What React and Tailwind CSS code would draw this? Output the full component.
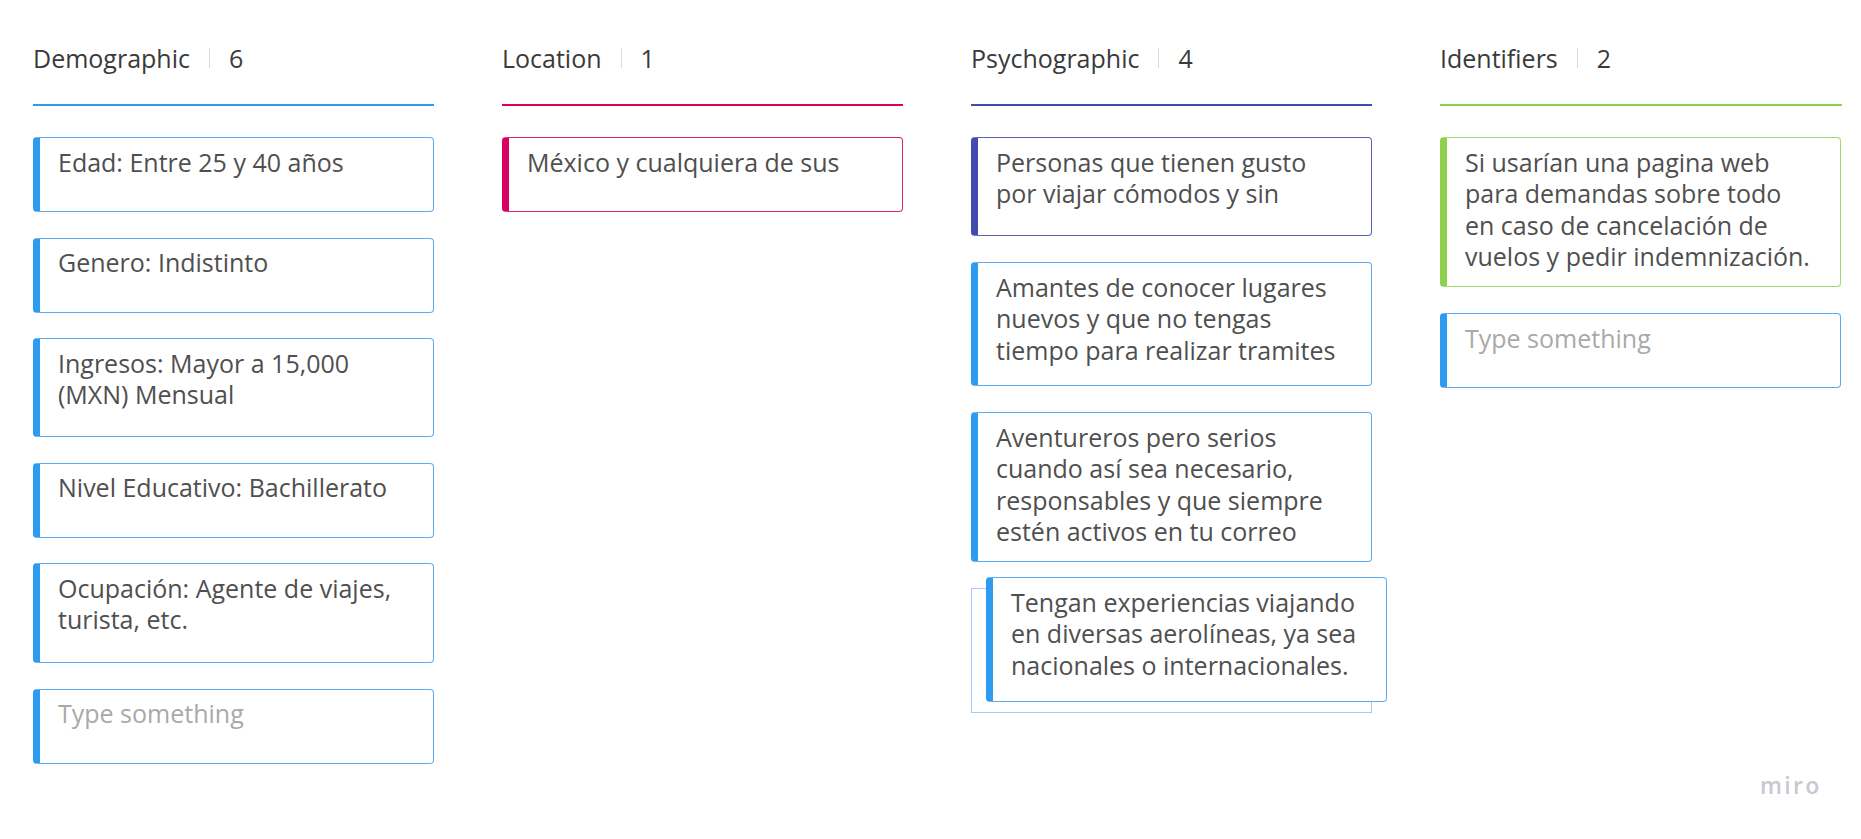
import React from "react";

const FONT = { fontFamily: '"Open Sans", "Noto Sans", sans-serif' };

function Header({ title, count, lineClass }) {
  return (
    <div>
      <div className="flex items-center h-[31.5px] text-[25px] leading-[31.5px] text-[#3a3a3a]">
        <span>{title}</span>
        <span className="mx-[19px] w-px h-[20px] bg-[#dcdcdc]" />
        <span>{count}</span>
      </div>
      <div className={"mt-[30px] h-[2px] " + lineClass} />
    </div>
  );
}

function Card({ lines, h, color = "blue", placeholder = false }) {
  const colors = {
    blue: "border-[#5eaaf0] border-l-[#2d9bf0]",
    pink: "border-[#d8246f] border-l-[#da0063]",
    indigo: "border-[#5a62b8] border-l-[#414bb2]",
    green: "border-[#a2d773] border-l-[#8fd14f]",
  };
  return (
    <div
      className={
        "w-[401px] bg-white border border-l-[7px] rounded-[4px] pl-[18px] pr-[16px] pt-[8.5px] " +
        colors[color] +
        " " +
        h
      }
    >
      <div
        className={
          "text-[25px] leading-[31.5px] whitespace-nowrap " +
          (placeholder ? "text-[#a9a9a9]" : "text-[#4f4f4f]")
        }
      >
        {lines.map((l, i) => (
          <div key={i}>{l}</div>
        ))}
      </div>
    </div>
  );
}

export default function App() {
  return (
    <div className="relative w-[1861px] h-[839px] bg-white overflow-hidden" style={FONT}>
      <div className="flex gap-[68px] pl-[33px] pt-[42.5px]">
        {/* Demographic */}
        <div className="w-[401px] flex flex-col">
          <Header title="Demographic" count="6" lineClass="bg-[#2d9bf0]" />
          <div className="mt-[31px] flex flex-col gap-[25.5px]">
            <Card lines={["Edad: Entre 25 y 40 años"]} h="h-[75px]" />
            <Card lines={["Genero: Indistinto"]} h="h-[75px]" />
            <Card lines={["Ingresos: Mayor a 15,000", "(MXN) Mensual"]} h="h-[99px]" />
            <Card lines={["Nivel Educativo: Bachillerato"]} h="h-[75px]" />
            <Card lines={["Ocupación: Agente de viajes,", "turista, etc."]} h="h-[100px]" />
            <Card lines={["Type something"]} h="h-[75px]" placeholder />
          </div>
        </div>

        {/* Location */}
        <div className="w-[401px] flex flex-col">
          <Header title="Location" count="1" lineClass="bg-[#da0063]" />
          <div className="mt-[31px] flex flex-col gap-[25.5px]">
            <Card lines={["México y cualquiera de sus"]} h="h-[75px]" color="pink" />
          </div>
        </div>

        {/* Psychographic */}
        <div className="w-[401px] flex flex-col">
          <Header title="Psychographic" count="4" lineClass="bg-[#414bb2]" />
          <div className="mt-[31px] flex flex-col gap-[26px]">
            <Card
              lines={["Personas que tienen gusto", "por viajar cómodos y sin"]}
              h="h-[99px]"
              color="indigo"
            />
            <Card
              lines={["Amantes de conocer lugares", "nuevos y que no tengas", "tiempo para realizar tramites"]}
              h="h-[124px]"
            />
            <Card
              lines={[
                "Aventureros pero serios",
                "cuando así sea necesario,",
                "responsables y que siempre",
                "estén activos en tu correo",
              ]}
              h="h-[150px]"
            />
            <div className="relative w-[401px] h-[125px] border border-[#a9c8f3]">
              <div className="absolute left-[14px] top-[-12px]">
                <Card
                  lines={[
                    "Tengan experiencias viajando",
                    "en diversas aerolíneas, ya sea",
                    "nacionales o internacionales.",
                  ]}
                  h="h-[125px]"
                />
              </div>
            </div>
          </div>
        </div>

        {/* Identifiers */}
        <div className="w-[402px] flex flex-col">
          <Header title="Identifiers" count="2" lineClass="bg-[#8fd14f]" />
          <div className="mt-[31px] flex flex-col gap-[26px]">
            <Card
              lines={[
                "Si usarían una pagina web",
                "para demandas sobre todo",
                "en caso de cancelación de",
                "vuelos y pedir indemnización.",
              ]}
              h="h-[150px]"
              color="green"
            />
            <Card lines={["Type something"]} h="h-[75px]" placeholder />
          </div>
        </div>
      </div>

      <div className="absolute left-[1760px] top-[774px] text-[23px] leading-[23px] tracking-[2.3px] font-semibold text-[#c6c8d2]">
        miro
      </div>
    </div>
  );
}
